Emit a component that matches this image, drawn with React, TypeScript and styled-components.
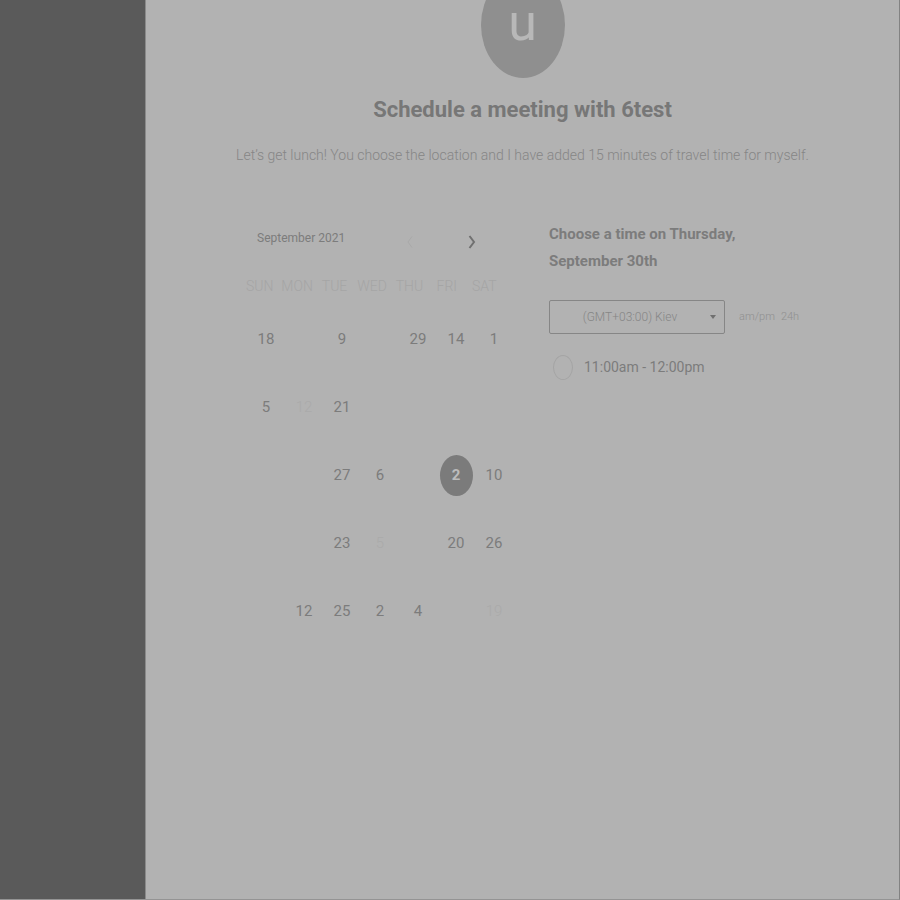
import React, { useState } from "react";
import styled, { createGlobalStyle } from "styled-components";

const GlobalStyle = createGlobalStyle`
  *, *::before, *::after { box-sizing: border-box; }
  html, body, #root { min-height: 100vh; }
  body {
    margin: 0;
    overflow: hidden;
    background: #b2b2b2;
    color: #7c7c7c;
    font-family: Roboto, sans-serif;
  }
  button, select, input { font: inherit; color: inherit; }
`;

const Page = styled.div`
  display: flex;
  height: 100vh;
  border-right: 1px solid #828282;
  border-bottom: 1px solid #949494;
`;

const Sidebar = styled.aside`
  flex: 0 0 146px;
  background: #5a5a5a;
  border-right: 1px solid #8a8a8a;
`;

const Main = styled.main`
  flex: 1;
  min-width: 0;
  overflow: hidden;
  background: #b2b2b2;
`;

const Intro = styled.header`
  display: flex;
  flex-direction: column;
  align-items: center;
  text-align: center;
`;

const Avatar = styled.div`
  display: flex;
  justify-content: center;
  width: 84px;
  height: 106px;
  margin-top: -28px;
  padding-top: 31px;
  border-radius: 50%;
  background: #8f8f8f;
  color: #b8b8b8;
  font-size: 52px;
  line-height: 40px;
`;

const Title = styled.h1`
  margin: 16px 0 0;
  color: #777;
  font-size: 22px;
  font-weight: 700;
  line-height: 32px;
`;

const Description = styled.p`
  margin: 16px 0 0;
  color: #868686;
  font-size: 14px;
  font-weight: 300;
  line-height: 26px;
`;

const Scheduler = styled.div`
  display: grid;
  grid-template-columns: 272px 1fr;
  column-gap: 36px;
  padding: 53px 95px 0;
`;

const MonthBar = styled.div`
  display: flex;
  align-items: flex-start;
  padding: 1px 10px 0 16px;
`;

const MonthName = styled.h2`
  flex: 1;
  margin: 0;
  padding-top: 6px;
  font-size: 12px;
  font-weight: 400;
  line-height: 20px;
`;

const Arrow = styled.button`
  display: flex;
  align-items: center;
  justify-content: center;
  width: 62px;
  height: 40px;
  padding: 0;
  border: 0;
  background: none;
  color: #707070;
  cursor: pointer;
  &:disabled { color: #a9a9a9; cursor: default; }
`;

const MonthGrid = styled.table`
  display: block;
  margin-top: 14px;
`;

const WeekHead = styled.thead`
  display: block;
  padding-right: 10px;
`;

const WeekBody = styled.tbody`
  display: block;
  padding: 9px 0 0 6px;
`;

const Week = styled.tr`
  display: grid;
  grid-template-columns: repeat(7, 1fr);
`;

const DayName = styled.th`
  padding: 0;
  color: #a5a5a5;
  font-size: 14px;
  font-weight: 300;
  line-height: 20px;
`;

const DayCell = styled.td`
  display: flex;
  align-items: center;
  justify-content: center;
  height: 68px;
  padding: 0;
`;

const Day = styled.button<{ $selected: boolean }>`
  width: 33px;
  height: 41px;
  padding: 0;
  border: 0;
  border-radius: 50%;
  background: ${(p) => (p.$selected ? "#7b7b7b" : "none")};
  color: ${(p) => (p.$selected ? "#bcbcbc" : "#7c7c7c")};
  font-size: 15px;
  font-weight: ${(p) => (p.$selected ? 700 : 400)};
  cursor: pointer;
  &:disabled { color: #aaa; font-weight: 300; cursor: default; }
`;

const TimeTitle = styled.h2`
  margin: 0;
  max-width: 220px;
  font-size: 15px;
  font-weight: 700;
  line-height: 27px;
`;

const ZoneRow = styled.div`
  display: flex;
  align-items: center;
  gap: 14px;
  margin-top: 25px;
`;

const SelectWrap = styled.div`
  position: relative;
  flex: 0 0 176px;
`;

const ZoneSelect = styled.select`
  display: block;
  width: 100%;
  height: 34px;
  padding: 0 20px 0 6px;
  border: 1px solid #868686;
  border-radius: 2px;
  appearance: none;
  background: none;
  color: #868686;
  font-size: 12px;
  font-weight: 300;
  text-align: center;
  text-align-last: center;
`;

const Caret = styled.svg`
  position: absolute;
  top: 15px;
  right: 9px;
  pointer-events: none;
`;

const Formats = styled.div`
  display: flex;
  gap: 6px;
`;

const Format = styled.button`
  padding: 0;
  border: 0;
  background: none;
  color: #909090;
  font-size: 11px;
  font-weight: 300;
  line-height: 20px;
  cursor: pointer;
`;

const Slot = styled.label`
  display: flex;
  align-items: center;
  gap: 11px;
  margin-top: 20px;
  padding-left: 4px;
  font-size: 14px;
  line-height: 26px;
`;

const SlotRadio = styled.input`
  width: 20px;
  height: 25px;
  margin: 0;
  border: 1px solid #a4a4a4;
  border-radius: 50%;
  appearance: none;
  &:checked { background: #7b7b7b; }
`;

type DayEntry = { label: string; faint?: boolean } | null;
const d = (label: string): DayEntry => ({ label });
const f = (label: string): DayEntry => ({ label, faint: true });

const dayNames = ["SUN", "MON", "TUE", "WED", "THU", "FRI", "SAT"];
const weeks: DayEntry[][] = [
  [d("18"), null, d("9"), null, d("29"), d("14"), d("1")],
  [d("5"), f("12"), d("21"), null, null, null, null],
  [null, null, d("27"), d("6"), null, d("2"), d("10")],
  [null, null, d("23"), f("5"), null, d("20"), d("26")],
  [null, d("12"), d("25"), d("2"), d("4"), null, f("19")],
];

export default function App() {
  const [selected, setSelected] = useState("2-5");

  return (
    <>
      <GlobalStyle />
      <Page>
        <Sidebar />
        <Main>
          <Intro>
            <Avatar>u</Avatar>
            <Title>Schedule a meeting with 6test</Title>
            <Description>
              Let’s get lunch! You choose the location and I have added 15 minutes of travel time for myself.
            </Description>
          </Intro>
          <Scheduler>
            <section>
              <MonthBar>
                <MonthName>September 2021</MonthName>
                <Arrow type="button" aria-label="Previous month" disabled>
                  <svg width="8" height="14" viewBox="0 0 8 14" fill="none" stroke="currentColor">
                    <path d="M6 1.5 2 7l4 5.5" />
                  </svg>
                </Arrow>
                <Arrow type="button" aria-label="Next month">
                  <svg width="8" height="14" viewBox="0 0 8 14" fill="none" stroke="currentColor" strokeWidth="2">
                    <path d="M1.500 1 6 7l-4.500 6" />
                  </svg>
                </Arrow>
              </MonthBar>
              <MonthGrid>
                <WeekHead>
                  <Week>
                    {dayNames.map((name) => (
                      <DayName key={name} scope="col">{name}</DayName>
                    ))}
                  </Week>
                </WeekHead>
                <WeekBody>
                  {weeks.map((week, w) => (
                    <Week key={w}>
                      {week.map((day, i) => (
                        <DayCell key={i}>
                          {day && (
                            <Day
                              type="button"
                              disabled={day.faint}
                              $selected={selected === `${w}-${i}`}
                              onClick={() => setSelected(`${w}-${i}`)}
                            >
                              {day.label}
                            </Day>
                          )}
                        </DayCell>
                      ))}
                    </Week>
                  ))}
                </WeekBody>
              </MonthGrid>
            </section>
            <section>
              <TimeTitle>Choose a time on Thursday, September 30th</TimeTitle>
              <ZoneRow>
                <SelectWrap>
                  <ZoneSelect aria-label="Time zone">
                    <option>(GMT+03:00) Kiev</option>
                  </ZoneSelect>
                  <Caret width="6" height="4" viewBox="0 0 6 4" fill="#707070">
                    <path d="M0 0h6L3 4z" />
                  </Caret>
                </SelectWrap>
                <Formats>
                  <Format type="button">am/pm</Format>
                  <Format type="button">24h</Format>
                </Formats>
              </ZoneRow>
              <Slot>
                <SlotRadio type="radio" name="slot" />
                11:00am - 12:00pm
              </Slot>
            </section>
          </Scheduler>
        </Main>
      </Page>
    </>
  );
}
